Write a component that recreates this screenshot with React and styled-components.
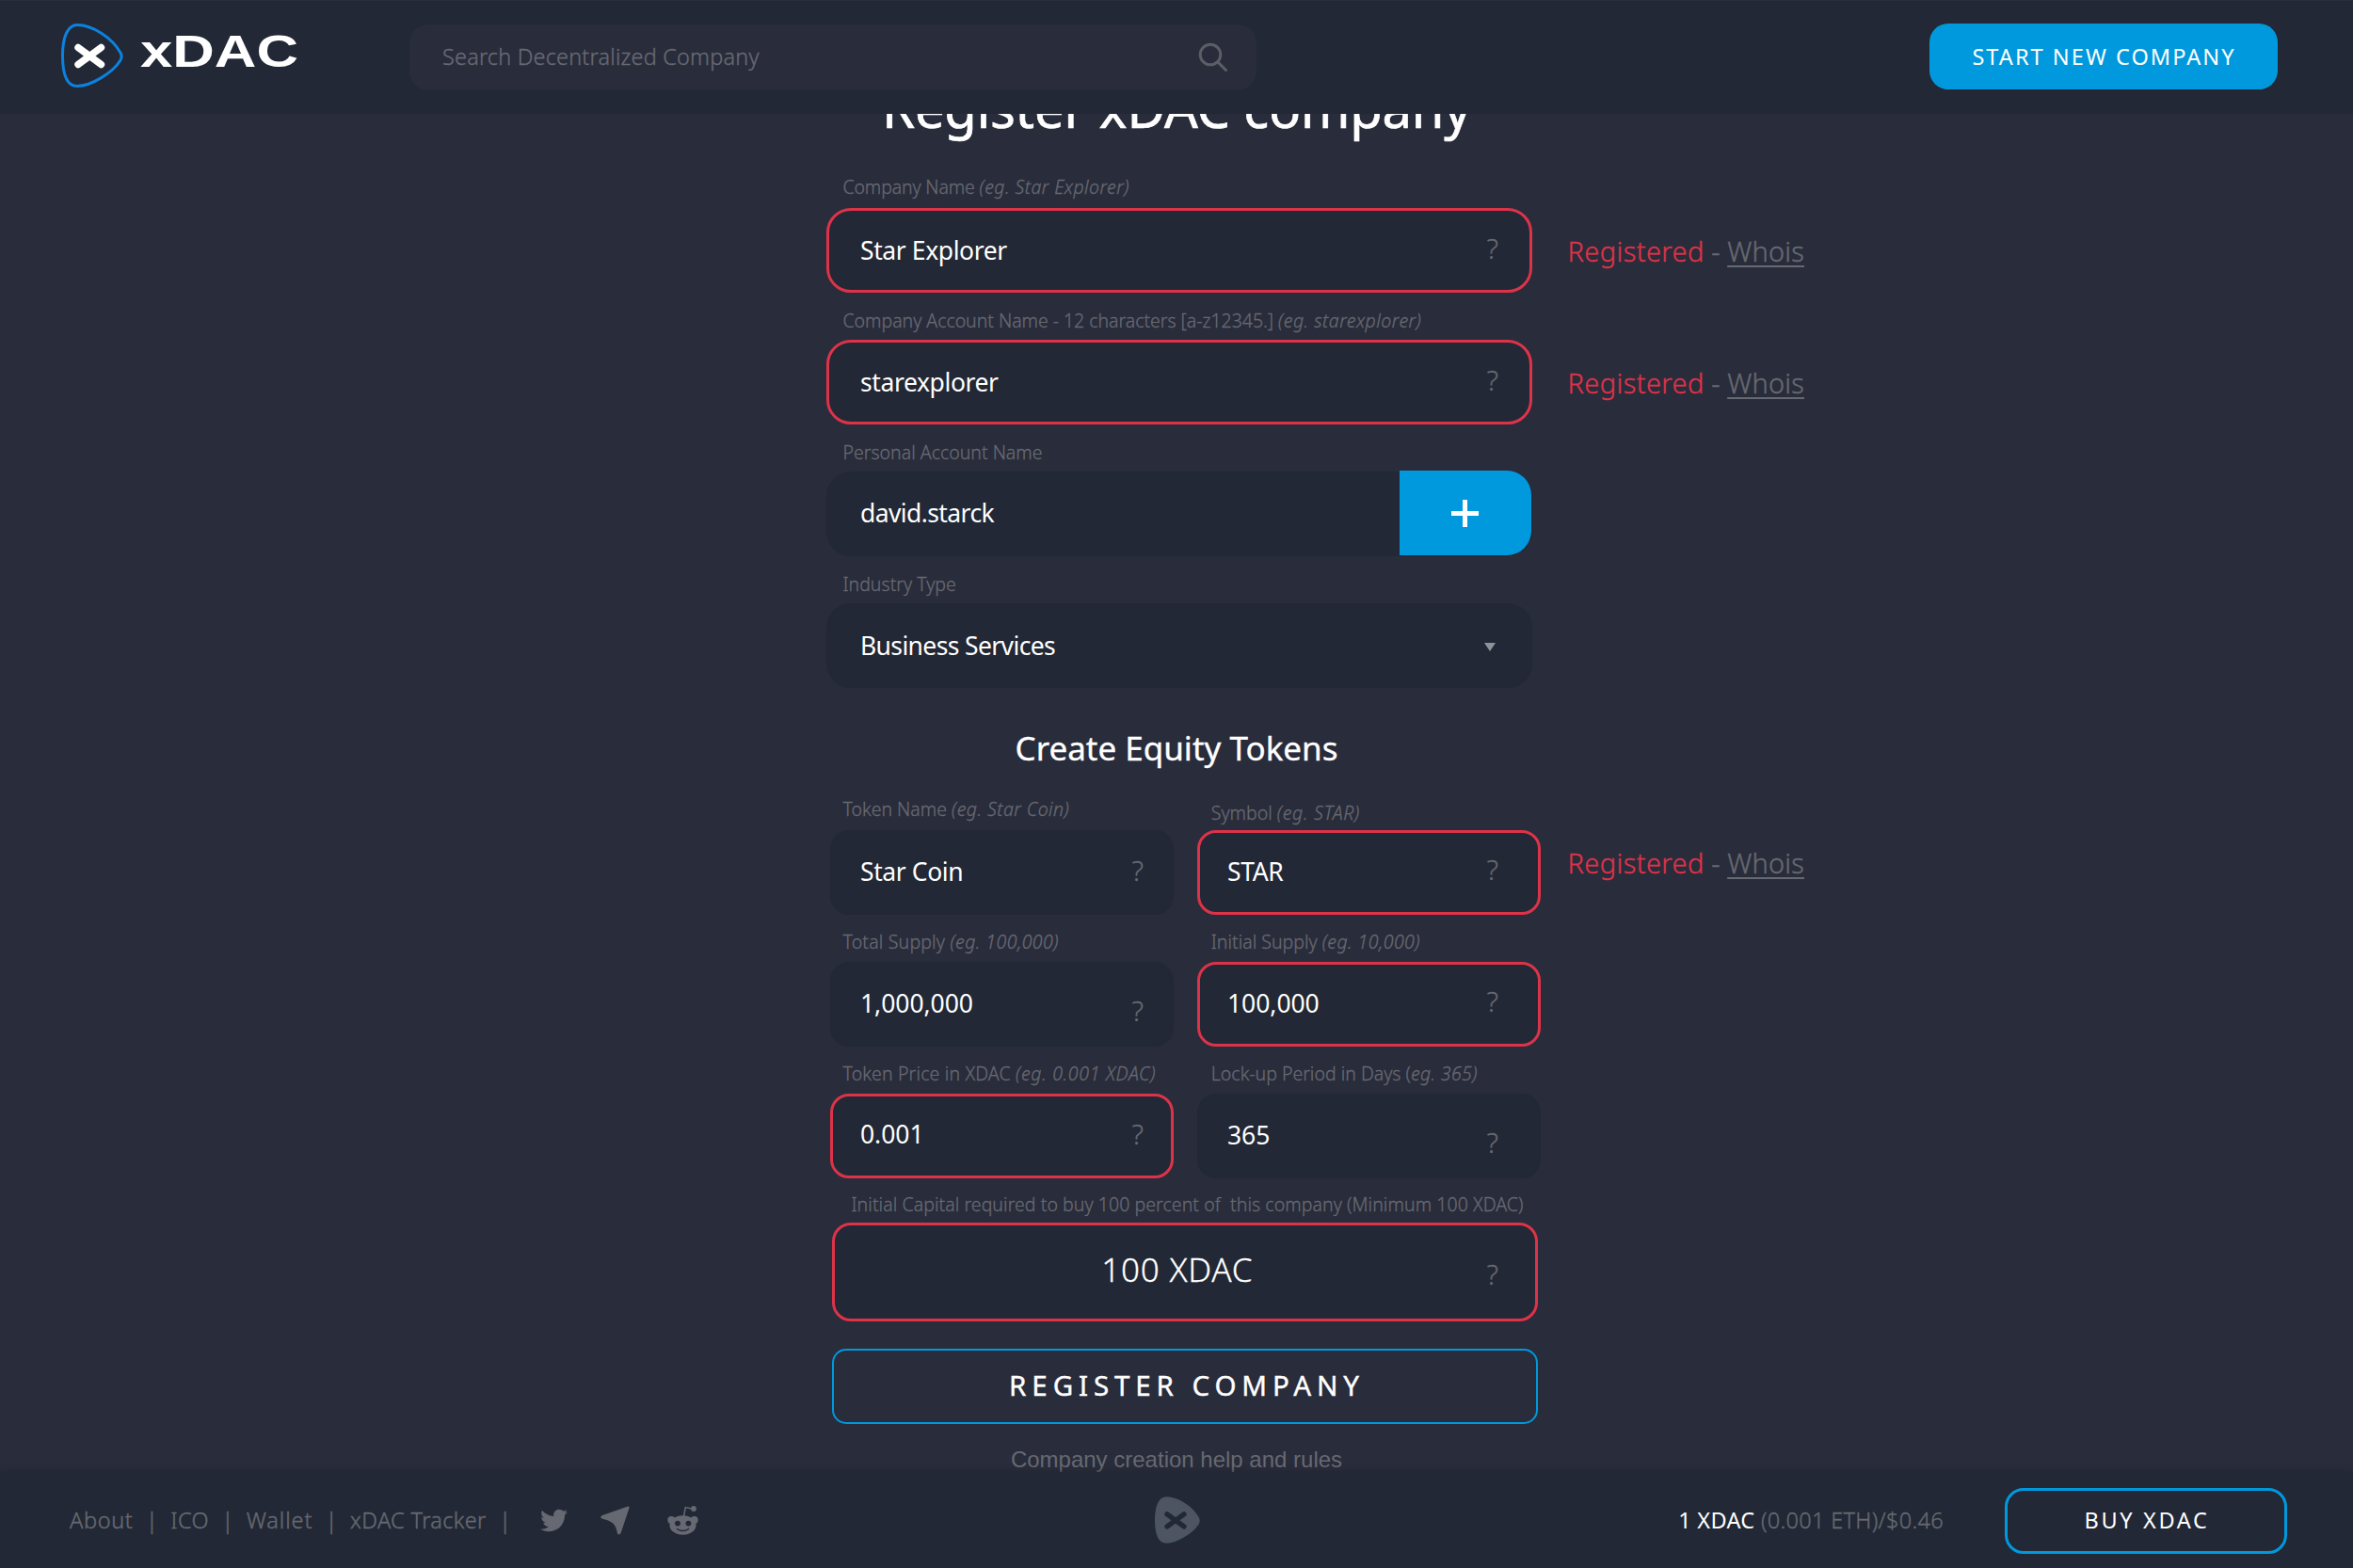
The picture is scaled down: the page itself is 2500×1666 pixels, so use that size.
import React from 'react';
import styled, { createGlobalStyle } from 'styled-components';
import { FaTwitter } from 'react-icons/fa';

const color = {
  page: '#292c3b',
  panel: '#222835',
  accent: '#0099dd',
  danger: '#dd3349',
  muted: '#666971',
  logoGrey: '#4d5462',
};

const GlobalStyle = createGlobalStyle`
  *, *::before, *::after { box-sizing: border-box; }
  body {
    margin: 0;
    background: ${color.page};
    color: #fff;
    font-family: "Noto Sans", "Open Sans", sans-serif;
    white-space: nowrap;
  }
`;

const Page = styled.div`
  display: flex;
  flex-direction: column;
  width: 2500px;
  height: 1666px;
  overflow: hidden;
`;

/* Header */

const Header = styled.header`
  flex: none;
  display: flex;
  align-items: center;
  height: 121px;
  padding: 0 80px 0 65px;
  background: ${color.panel};
  border-top: 1px solid #282e3b;
`;

const Brand = styled.a`
  display: flex;
  align-items: center;
  width: 370px;
`;

const Mark = styled.svg`
  display: block;
  flex: none;
  width: ${(p) => p.$width}px;
  height: ${(p) => p.$height}px;
`;

const HeaderMark = styled(Mark)`
  margin-top: -4px;
`;

const Wordmark = styled.span`
  margin: -12px 0 0 18px;
  font: 700 48px/48px "Liberation Sans", Arial, sans-serif;
  transform: scaleX(1.285);
  transform-origin: left center;
`;

const SearchBox = styled.div`
  display: flex;
  align-items: center;
  justify-content: space-between;
  width: 900px;
  height: 70px;
  padding: 0 30px 0 35px;
  border-radius: 20px;
  background: ${color.page};
  color: ${color.muted};
  font-size: 23.5px;
  font-weight: 300;
  letter-spacing: 0.17px;
  -webkit-text-stroke: 0.35px currentColor;
`;

const SearchPlaceholder = styled.span`
  margin-top: -2px;
`;

const Button = styled.button`
  display: flex;
  align-items: center;
  justify-content: center;
  border: 0;
  color: #fff;
  font-family: inherit;
  font-weight: 400;
`;

const StartButton = styled(Button)`
  width: 370px;
  height: 70px;
  margin: -2px 0 0 auto;
  padding: 0 0 0 1px;
  border-radius: 20px;
  background: ${color.accent};
  font-size: 23.5px;
  letter-spacing: 2.05px;
`;

/* Form */

const Main = styled.main`
  flex: none;
  height: 1443px;
  overflow: hidden;
`;

const Title = styled.h1`
  margin: -37px 0 0;
  height: 61px;
  font-size: 56px;
  line-height: 60px;
  font-weight: 400;
  letter-spacing: -0.1px;
  text-align: center;
  -webkit-text-stroke: 0.7px currentColor;
`;

const Subtitle = styled.h2`
  margin: 44px 0 0;
  height: 40px;
  font-size: 35px;
  line-height: 40px;
  font-weight: 400;
  text-align: center;
  -webkit-text-stroke: 0.35px currentColor;
`;

const Section = styled.section`
  display: flex;
  flex-direction: column;
  padding-left: ${(p) => p.$left}px;
`;

const FieldPair = styled.div`
  display: flex;
  gap: 25px;
`;

const Field = styled.div`
  display: flex;
  flex-direction: column;
`;

const Label = styled.label`
  display: flex;
  align-items: flex-end;
  height: ${(p) => p.$height ?? 50}px;
  padding: 0 0 ${(p) => p.$bottom ?? 7.6}px ${(p) => p.$left ?? 17.5}px;
  color: ${color.muted};
  font-size: 19.5px;
  line-height: 24px;
  font-weight: 300;
  letter-spacing: ${(p) => p.$spacing ?? 0}px;
  white-space: pre;
  -webkit-text-stroke: 0.3px currentColor;

  em {
    font-style: italic;
    letter-spacing: ${(p) => p.$egSpacing ?? 0.45}px;
  }
`;

const Line = styled.div`
  display: flex;
  align-items: center;
`;

const InputBox = styled.div`
  flex: none;
  display: flex;
  align-items: center;
  justify-content: space-between;
  width: ${(p) => p.$width ?? 750}px;
  height: ${(p) => p.$height ?? 90}px;
  padding: 0 ${(p) => p.$right ?? 33}px 0 ${(p) => p.$left ?? 33}px;
  border: 3px solid ${(p) => (p.$invalid ? color.danger : color.panel)};
  border-radius: ${(p) => p.$radius ?? 26}px;
  background: ${color.panel};
`;

const Value = styled.span`
  margin-top: ${(p) => -2 * (p.$lift ?? 0)}px;
  font-size: 26.5px;
  line-height: 36px;
  letter-spacing: ${(p) => p.$spacing ?? -0.4}px;
`;

const Amount = styled.span`
  flex: 1;
  margin-top: -6px;
  font-size: 35px;
  line-height: 44px;
  font-weight: 300;
  letter-spacing: 0.8px;
  text-align: center;
  -webkit-text-stroke: 0.3px currentColor;
`;

const Hint = styled.span`
  margin-top: ${(p) => 2 * p.$drop}px;
  color: ${color.muted};
  font-size: 29.5px;
  line-height: 36px;
  font-weight: 300;
  -webkit-text-stroke: 0.3px currentColor;
`;

const AccountRow = styled(Line)`
  width: 750px;
  height: 90px;
  padding-left: 36px;
  border-radius: 26px;
  background: ${color.panel};
`;

const AddButton = styled(Button)`
  width: 140px;
  height: 90px;
  margin: -2px 1px 0 auto;
  padding: 0 1px 0 0;
  border-radius: 0 26px 26px 0;
  background: ${color.accent};
`;

const Caret = styled.span`
  margin: 3px 3px 0 0;
  border: 6px solid transparent;
  border-top: 9px solid #8e9299;
  border-bottom: 0;
`;

const StatusText = styled.span`
  margin: ${(p) => p.$top ?? 0}px 0 0 ${(p) => p.$left}px;
  color: ${color.muted};
  font-size: 29px;
  line-height: 36px;
  font-weight: 300;
  white-space: pre;
  -webkit-text-stroke: 0.4px currentColor;
`;

const Taken = styled.span`
  color: ${color.danger};
  letter-spacing: 0.4px;
`;

const WhoisLink = styled.a`
  letter-spacing: 0.2px;
  text-decoration: underline;
  text-decoration-thickness: 2px;
  text-underline-offset: 4px;
`;

const RegisterButton = styled(Button)`
  width: 750px;
  height: 80px;
  margin-top: 29px;
  padding: 0 0 3px 4px;
  border: 2px solid ${color.accent};
  border-radius: 15px;
  background: transparent;
  font-size: 29.5px;
  letter-spacing: 5.9px;
  -webkit-text-stroke: 0.4px currentColor;
`;

const Help = styled.p`
  margin: 23px 0 0;
  color: ${color.muted};
  font: 24px/30px "Liberation Sans", Arial, sans-serif;
  text-align: center;
`;

/* Footer */

const Footer = styled.footer`
  flex: none;
  display: grid;
  grid-template-columns: 1227px 48px 1fr;
  align-items: center;
  height: 102px;
  background: ${color.panel};
  box-shadow: 0 0 6px rgba(34, 32, 42, 0.8);
  color: ${color.muted};
  font-size: 23.5px;
  font-weight: 300;
`;

const FooterNav = styled.nav`
  display: flex;
  align-items: center;
  gap: 13.5px;
  padding-left: 74px;
  -webkit-text-stroke: 0.4px currentColor;
`;

const FooterLink = styled.a`
  letter-spacing: ${(p) => p.$spacing ?? 0.4}px;
`;

const Social = styled.div`
  display: flex;
  align-items: center;
  gap: 35px;
  margin-left: 18px;
`;

const SocialIcon = styled.svg`
  display: block;
  width: ${(p) => p.$width}px;
  height: 31px;
  margin-left: ${(p) => p.$left ?? 0}px;
`;

const TwitterIcon = styled(FaTwitter)`
  display: block;
  width: 29px;
  height: 29px;
`;

const Trading = styled.div`
  display: flex;
  align-items: center;
  justify-content: flex-end;
  gap: 65px;
  padding-right: 70px;
`;

const Rate = styled.span`
  letter-spacing: 0.32px;
  -webkit-text-stroke: 0.35px currentColor;
`;

const RateUnit = styled.span`
  color: #fff;
  font-weight: 400;
  -webkit-text-stroke: 0;
`;

const BuyButton = styled(Button)`
  width: 300px;
  height: 70px;
  margin-top: 2px;
  padding: 0 0 2px 2px;
  border: 3px solid ${color.accent};
  border-radius: 20px;
  background: transparent;
  font-size: 23.5px;
  letter-spacing: 2.65px;
`;

const markPath =
  'M17 1.5C33 1.5 54 15 63 31Q65.2 35 63 39C55 52 32 66.5 17 66.5C7 66.5 1.5 56 1.5 34C1.5 14 7 1.5 17 1.5Z';

function MarkShape({ fill, stroke, cross }) {
  return (
    <>
      <path d={markPath} fill={fill} stroke={stroke} strokeWidth="3" strokeLinejoin="round" />
      <path d="M18 25.5L42.5 43.5M42.5 25.5L18 43.5" stroke={cross} strokeWidth="7.4" strokeLinecap="round" />
    </>
  );
}

function Status({ left, top }) {
  return (
    <StatusText $left={left} $top={top}>
      <Taken>Registered</Taken> - <WhoisLink>Whois</WhoisLink>
    </StatusText>
  );
}

function HalfField({ label, eg, value, invalid, second, bottom = 8.6, height, drop, lift = 1, spacing, labelSpacing, egSpacing }) {
  return (
    <Field>
      <Label $height={height} $bottom={bottom} $left={second ? 14.8 : 13.5} $spacing={labelSpacing} $egSpacing={egSpacing}>
        {label}
        <em>{eg}</em>
      </Label>
      <InputBox $width={365} $radius={20} $invalid={invalid} $left={29} $right={second ? 42 : 29}>
        <Value $lift={lift} $spacing={spacing}>{value}</Value>
        <Hint $drop={drop}>?</Hint>
      </InputBox>
    </Field>
  );
}

export default function App() {
  return (
    <Page>
      <GlobalStyle />
      <Header>
        <Brand>
          <HeaderMark $width={66} $height={68} viewBox="0 0 66 68">
            <MarkShape fill="none" stroke="#0b82e0" cross="#fff" />
          </HeaderMark>
          <Wordmark>xDAC</Wordmark>
        </Brand>
        <SearchBox>
          <SearchPlaceholder>Search Decentralized Company</SearchPlaceholder>
          <Mark $width={32} $height={32} viewBox="0 0 32 32" fill="none" stroke="#5c5e66" strokeWidth="3" strokeLinecap="round">
            <circle cx="13" cy="13" r="10.8" />
            <path d="M21 21L29.5 29.5" />
          </Mark>
        </SearchBox>
        <StartButton>START NEW COMPANY</StartButton>
      </Header>

      <Main>
        <Title>Register xDAC company</Title>

        <Section $left={878}>
          <Field>
            <Label $height={76} $bottom={9.6} $spacing={-0.15}>
              Company Name <em>(eg. Star Explorer)</em>
            </Label>
            <Line>
              <InputBox $invalid>
                <Value>Star Explorer</Value>
                <Hint $drop={-2.4}>?</Hint>
              </InputBox>
              <Status left={37.5} top={2} />
            </Line>
          </Field>
          <Field>
            <Label $spacing={-0.03} $egSpacing={0.5}>
              Company Account Name - 12 characters [a-z12345.] <em>(eg. starexplorer)</em>
            </Label>
            <Line>
              <InputBox $invalid>
                <Value>starexplorer</Value>
                <Hint $drop={-2.4}>?</Hint>
              </InputBox>
              <Status left={37.5} top={2} />
            </Line>
          </Field>
          <Field>
            <Label>Personal Account Name</Label>
            <AccountRow>
              <Value $lift={1} $spacing={-0.6}>david.starck</Value>
              <AddButton aria-label="Add account">
                <Mark $width={29} $height={29} viewBox="0 0 29 29" stroke="#fff" strokeWidth="5">
                  <path d="M14.5 0V29M0 14.5H29" />
                </Mark>
              </AddButton>
            </AccountRow>
          </Field>
          <Field>
            <Label>Industry Type</Label>
            <InputBox>
              <Value $spacing={-0.63}>Business Services</Value>
              <Caret />
            </InputBox>
          </Field>
        </Section>

        <Subtitle>Create Equity Tokens</Subtitle>

        <Section $left={882}>
          <Line>
            <FieldPair>
              <HalfField label="Token Name " eg="(eg. Star Coin)" value="Star Coin" height={67} bottom={9.6} drop={-2.4} />
              <HalfField label="Symbol " eg="(eg. STAR)" value="STAR" height={67} bottom={5.6} drop={-3.4} egSpacing={0.7} invalid second />
            </FieldPair>
            <Status left={28.5} top={47} />
          </Line>
          <FieldPair>
            <HalfField label="Total Supply " eg="(eg. 100,000)" value="1,000,000" drop={6.6} spacing={-0.05} labelSpacing={0.18} />
            <HalfField label="Initial Supply " eg="(eg. 10,000)" value="100,000" drop={-3.4} spacing={-0.05} invalid second />
          </FieldPair>
          <FieldPair>
            <HalfField label="Token Price in XDAC " eg="(eg. 0.001 XDAC)" value="0.001" drop={-2.4} lift={2} spacing={-0.05} labelSpacing={0.15} egSpacing={0.7} invalid />
            <HalfField label="Lock-up Period in Days (" eg="eg. 365)" value="365" drop={6.6} spacing={-0.05} egSpacing={0.35} second />
          </FieldPair>
        </Section>

        <Section $left={884}>
          <Field>
            <Label $height={47} $bottom={6.6} $left={20.5} $spacing={0.06}>
              {'Initial Capital required to buy 100 percent of  this company (Minimum 100 XDAC)'}
            </Label>
            <InputBox $invalid $height={105} $radius={20} $left={35} $right={39}>
              <Amount>100 XDAC</Amount>
              <Hint $drop={2.1}>?</Hint>
            </InputBox>
          </Field>
          <RegisterButton>REGISTER COMPANY</RegisterButton>
        </Section>

        <Help>Company creation help and rules</Help>
      </Main>

      <Footer>
        <FooterNav>
          <FooterLink $spacing={0.65}>About</FooterLink>
          <span>|</span>
          <FooterLink>ICO</FooterLink>
          <span>|</span>
          <FooterLink $spacing={0.9}>Wallet</FooterLink>
          <span>|</span>
          <FooterLink $spacing={0.35}>xDAC Tracker</FooterLink>
          <span>|</span>
          <Social>
            <TwitterIcon />
            <SocialIcon $width={31} viewBox="0 0 31 31" fill="currentColor">
              <path d="M28.6 0.7Q30.8 0 30.5 2.3L21.6 29Q20.2 31.6 18 29.6Q16.6 21.5 13.2 18.6Q9 15 1.2 13.4Q-0.8 11.4 1.4 10.2Z" />
            </SocialIcon>
            <SocialIcon $width={33} $left={5} viewBox="0 0 33 31">
              <path d="M17.5 11L19.3 1.6L27 3.2" fill="none" stroke="currentColor" strokeWidth="1.5" />
              <g fill="currentColor">
                <circle cx="28" cy="3" r="2.9" />
                <circle cx="4.3" cy="15" r="4" />
                <circle cx="28.7" cy="15" r="4" />
                <ellipse cx="16.5" cy="20.5" rx="14" ry="10.3" />
              </g>
              <g fill={color.panel}>
                <circle cx="11" cy="18.6" r="2.9" />
                <circle cx="22.4" cy="18.6" r="2.9" />
              </g>
              <path d="M10.5 24.5Q16.5 28.6 22.5 24.5" fill="none" stroke={color.panel} strokeWidth="1.5" strokeLinecap="round" />
            </SocialIcon>
          </Social>
        </FooterNav>
        <Mark $width={48} $height={50} viewBox="0 0 66 68">
          <MarkShape fill={color.logoGrey} stroke={color.logoGrey} cross={color.panel} />
        </Mark>
        <Trading>
          <Rate>
            <RateUnit>1 XDAC</RateUnit> (0.001 ETH)/$0.46
          </Rate>
          <BuyButton>BUY XDAC</BuyButton>
        </Trading>
      </Footer>
    </Page>
  );
}
